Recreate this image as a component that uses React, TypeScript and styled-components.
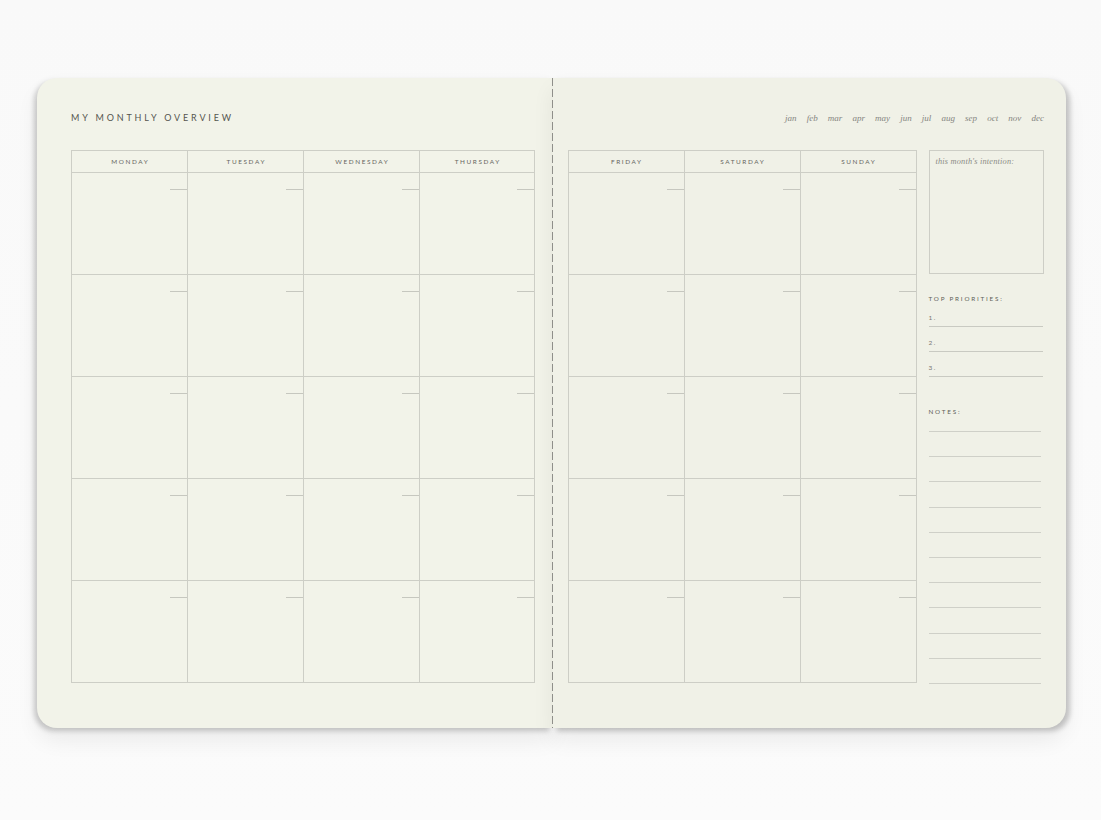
import React from "react";
import styled, { createGlobalStyle } from "styled-components";

const Global = createGlobalStyle`
  html, body { margin: 0; padding: 0; background: #fafafa; }
  body { font-family: "Lato", "Liberation Sans", sans-serif; }
`;

const Stage = styled.div`
  width: 1101px;
  height: 820px;
  box-sizing: border-box;
  padding: 78px 0 0 37px;
  background: linear-gradient(#f9f9f9, #fbfbfb);
`;

const Book = styled.div`
  display: flex;
  width: 1029px;
  height: 650px;
`;

const Page = styled.div<{ $side: "left" | "right" }>`
  position: relative;
  box-sizing: border-box;
  height: 100%;
  background: ${(p) => (p.$side === "left" ? "#f2f3e9" : "#f0f1e7")};
  border-radius: ${(p) => (p.$side === "left" ? "20px 0 0 20px" : "0 20px 20px 0")};
  width: ${(p) => (p.$side === "left" ? "515px" : "514px")};
  padding: ${(p) => (p.$side === "left" ? "35px 0 0 34px" : "35px 0 0 15px")};
  box-shadow: ${(p) =>
    p.$side === "left"
      ? "-3px 3px 5px rgba(0,0,0,0.18), 0 12px 22px rgba(0,0,0,0.07)"
      : "4px 3px 5px rgba(0,0,0,0.2), 0 12px 22px rgba(0,0,0,0.07)"};
  display: flex;
  flex-direction: column;
`;

const Spine = styled.div`
  width: 1px;
  height: 100%;
  flex: none;
  background: repeating-linear-gradient(
    to bottom,
    #8f8f8a 0px,
    #8f8f8a 8px,
    transparent 8px,
    transparent 11px
  );
  background-color: #eceee3;
  position: relative;
  z-index: 1;
`;

const TitleRow = styled.div<{ $align?: string }>`
  height: 10px;
  display: flex;
  align-items: center;
  justify-content: ${(p) => p.$align || "flex-start"};
`;

const Title = styled.h1`
  margin: 0;
  font-family: "Lato", "Liberation Sans", sans-serif;
  font-weight: 400;
  font-size: 9px;
  line-height: 10px;
  letter-spacing: 2.85px;
  color: #55554f;
`;

const Months = styled.div`
  display: flex;
  justify-content: space-between;
  width: 259px;
  margin-right: 22px;
  font-family: "Liberation Serif", "DejaVu Serif", serif;
  font-style: italic;
  font-size: 9px;
  line-height: 10px;
  color: #85857f;
`;

const Content = styled.div`
  display: flex;
  gap: 12px;
  margin-top: 27px;
`;

const Grid = styled.div<{ $cols: string }>`
  display: grid;
  grid-template-columns: ${(p) => p.$cols};
  grid-template-rows: 22px repeat(5, 102px);
  border-top: 1px solid #cdcec6;
  border-left: 1px solid #cdcec6;
  box-sizing: border-box;
  align-self: flex-start;
`;

const HeadCell = styled.div`
  border-right: 1px solid #cdcec6;
  border-bottom: 1px solid #cdcec6;
  display: flex;
  align-items: center;
  justify-content: center;
  font-family: "Lato", "Liberation Sans", sans-serif;
  font-size: 6.4px;
  letter-spacing: 1.6px;
  color: #66665f;
  padding-left: 1.6px;
`;

const Cell = styled.div`
  position: relative;
  border-right: 1px solid #cdcec6;
  border-bottom: 1px solid #cdcec6;
  &::after {
    content: "";
    position: absolute;
    top: 16px;
    right: 0;
    width: 17px;
    height: 1px;
    background: #c6c7bf;
  }
`;

const Sidebar = styled.div`
  width: 115px;
  display: flex;
  flex-direction: column;
`;

const IntentionBox = styled.div`
  height: 124px;
  box-sizing: border-box;
  border: 1px solid #cdcec6;
  padding: 6px 6px;
  font-family: "Liberation Serif", "DejaVu Serif", serif;
  font-style: italic;
  font-size: 8.3px;
  line-height: 10px;
  color: #8b8b85;
  letter-spacing: 0.2px;
`;

const Label = styled.div<{ $top: number }>`
  margin-top: ${(p) => p.$top}px;
  font-family: "Lato", "Liberation Sans", sans-serif;
  font-size: 6.3px;
  line-height: 10px;
  letter-spacing: 1.8px;
  color: #5f5f59;
`;

const PriorityRow = styled.div<{ $h: number }>`
  height: ${(p) => p.$h}px;
  width: 114px;
  border-bottom: 1px solid #c9cac2;
  display: flex;
  align-items: flex-end;
  padding-bottom: 4px;
  box-sizing: border-box;
  font-family: "Lato", "Liberation Sans", sans-serif;
  font-size: 6.5px;
  line-height: 8px;
  letter-spacing: 1.5px;
  color: #7a7a74;
`;

const NotesList = styled.div`
  margin-top: 14px;
  width: 112px;
  display: flex;
  flex-direction: column;
`;

const NoteLine = styled.div<{ $last?: boolean }>`
  border-top: 1px solid #cfd0c8;
  height: ${(p) => (p.$last ? "1px" : "25.2px")};
  box-sizing: border-box;
`;

const leftDays = ["MONDAY", "TUESDAY", "WEDNESDAY", "THURSDAY"];
const rightDays = ["FRIDAY", "SATURDAY", "SUNDAY"];
const months = ["jan", "feb", "mar", "apr", "may", "jun", "jul", "aug", "sep", "oct", "nov", "dec"];

function CalendarGrid({ days, cols }: { days: string[]; cols: string }) {
  const cells = Array.from({ length: days.length * 5 });
  return (
    <Grid $cols={cols}>
      {days.map((d) => (
        <HeadCell key={d}>{d}</HeadCell>
      ))}
      {cells.map((_, i) => (
        <Cell key={i} />
      ))}
    </Grid>
  );
}

export default function App() {
  return (
    <>
      <Global />
      <Stage>
        <Book>
          <Page $side="left">
            <TitleRow>
              <Title>MY MONTHLY OVERVIEW</Title>
            </TitleRow>
            <Content>
              <CalendarGrid days={leftDays} cols="116px 116px 116px 115px" />
            </Content>
          </Page>
          <Spine />
          <Page $side="right">
            <TitleRow $align="flex-end">
              <Months>
                {months.map((m) => (
                  <span key={m}>{m}</span>
                ))}
              </Months>
            </TitleRow>
            <Content>
              <CalendarGrid days={rightDays} cols="116px 116px 116px" />
              <Sidebar>
                <IntentionBox>this month's intention:</IntentionBox>
                <Label $top={20}>TOP PRIORITIES:</Label>
                <PriorityRow $h={23}>1.</PriorityRow>
                <PriorityRow $h={25}>2.</PriorityRow>
                <PriorityRow $h={25}>3.</PriorityRow>
                <Label $top={30}>NOTES:</Label>
                <NotesList>
                  {Array.from({ length: 11 }).map((_, i) => (
                    <NoteLine key={i} $last={i === 10} />
                  ))}
                </NotesList>
              </Sidebar>
            </Content>
          </Page>
        </Book>
      </Stage>
    </>
  );
}
